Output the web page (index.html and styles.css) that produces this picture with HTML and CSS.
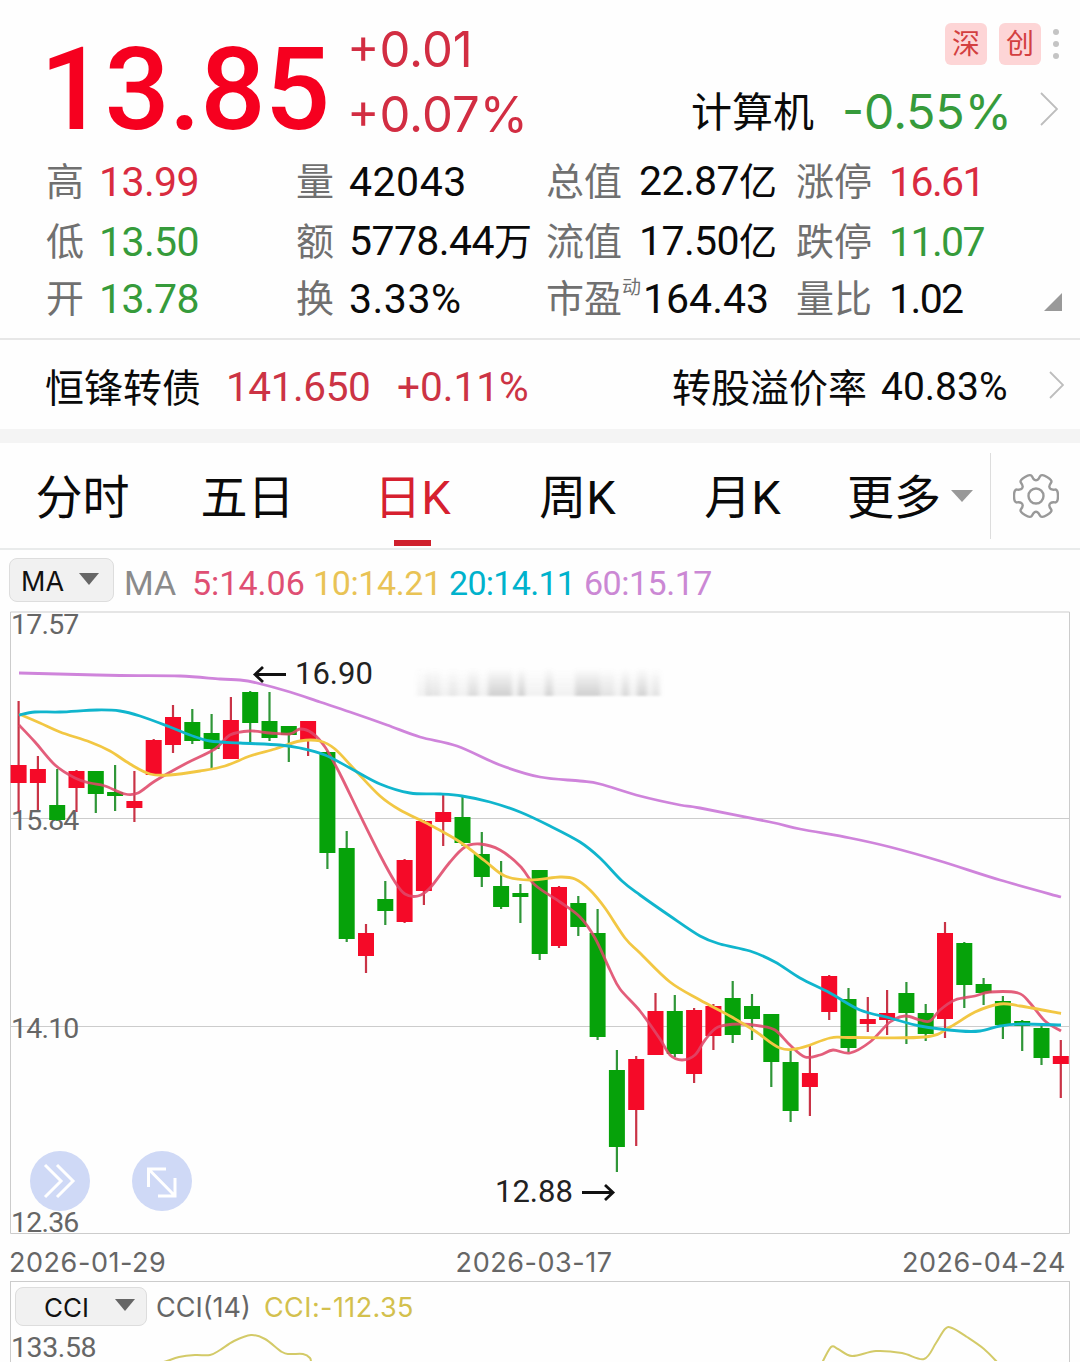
FILE: index.html
```html
<!DOCTYPE html>
<html lang="zh-CN">
<head>
  <meta charset="UTF-8">
  <meta name="viewport" content="width=device-width, initial-scale=1.0">
  <title>日K</title>
  <link rel="stylesheet" href="styles.css">
</head>
<body>
  <header class="quote">
    <div class="price">13.85</div>
    <div class="change">
      <div>+0.01</div>
      <div>+0.07%</div>
    </div>
    <div class="side">
      <div class="tags">
        <span class="tag">深</span>
        <span class="tag">创</span>
        <svg class="dots" width="8" height="32" viewBox="0 0 8 32"><circle cx="4" cy="4" r="3"/><circle cx="4" cy="16" r="3"/><circle cx="4" cy="28" r="3"/></svg>
      </div>
      <div class="sector">
        <span class="sector-name">计算机</span>
        <span class="sector-change green">-0.55%</span>
        <svg class="arrow" width="18" height="34" viewBox="0 0 18 34"><path d="M1 1l16 16L1 33"/></svg>
      </div>
    </div>
  </header>

  <section class="stats">
    <span class="label">高</span><span class="red">13.99</span>
    <span class="label">量</span><span class="wide-num">42043</span>
    <span class="label">总值</span><span>22.87<i>亿</i></span>
    <span class="label">涨停</span><span class="red tight">16.61</span>

    <span class="label">低</span><span class="green">13.50</span>
    <span class="label">额</span><span>5778.44<i>万</i></span>
    <span class="label">流值</span><span>17.50<i>亿</i></span>
    <span class="label">跌停</span><span class="green tight">11.07</span>

    <span class="label">开</span><span class="green">13.78</span>
    <span class="label">换</span><span class="wide-num">3.33%</span>
    <span class="label">市盈<sup>动</sup></span><span class="pe">164.43</span>
    <span class="label">量比</span><span class="tight">1.02</span>
    <svg class="corner" width="18" height="18" viewBox="0 0 18 18"><path d="M18 0v18H0z"/></svg>
  </section>

  <section class="bond">
    <span class="bond-name">恒锋转债</span>
    <span class="bond-price">141.650</span>
    <span class="bond-change">+0.11%</span>
    <span class="bond-label">转股溢价率</span>
    <span class="bond-rate">40.83%</span>
    <svg class="arrow" width="15" height="28" viewBox="0 0 15 28"><path d="M1 1l13 13L1 27"/></svg>
  </section>

  <nav class="tabs">
    <a class="tab">分时</a>
    <a class="tab">五日</a>
    <a class="tab active">日K</a>
    <a class="tab">周K</a>
    <a class="tab">月K</a>
    <a class="tab more">更多<svg width="22" height="12" viewBox="0 0 22 12"><path d="M0 0h22L11 12z"/></svg></a>
    <a class="settings">
      <svg width="46" height="48" viewBox="-23 -24 46 48"><path id="gear"/><circle r="7.5"/></svg>
    </a>
  </nav>

  <div class="indicator">
    <button class="select">MA<svg width="20" height="12" viewBox="0 0 20 12"><path d="M0 0h20L10 12z"/></svg></button>
    <span class="ma-name">MA</span>
    <span class="ma5">5:14.06</span>
    <span class="ma10">10:14.21</span>
    <span class="ma20">20:14.11</span>
    <span class="ma60">60:15.17</span>
  </div>

  <svg class="chart" width="1080" height="628" viewBox="0 608 1080 628">
    <defs>
      <filter id="soft" x="-10%" y="-30%" width="120%" height="160%"><feGaussianBlur stdDeviation="2 1"/></filter>
      <linearGradient id="fade" x1="0" y1="0" x2="0" y2="1">
        <stop offset="0" stop-color="#999" stop-opacity="0"/>
        <stop offset="1" stop-color="#999" stop-opacity=".42"/>
      </linearGradient>
    </defs>
    <path class="grid" d="M10.5 612H1069.500V1233.500H10.5zM10 818.500H1069M10 1026.500H1069"/>
    <g class="axis">
      <text x="11" y="634">17.57</text>
      <text x="11" y="830">15.84</text>
      <text x="11" y="1038">14.10</text>
      <text x="11" y="1232">12.36</text>
    </g>
    <g id="smudge" filter="url(#soft)"></g>
    <g id="candles"></g>
    <g id="lines"></g>
    <g class="mark">
      <path d="M286 674.500H255M263 667l-8 7.500 8 7.500"/>
      <text x="295" y="684">16.90</text>
      <path d="M582 1192.500H613M605 1185l8 7.500-8 7.500"/>
      <text x="495" y="1202">12.88</text>
    </g>
    <circle class="round" cx="60" cy="1181" r="30"/>
    <path class="round-icon" d="M45 1165l16 16-16 16M57 1165l16 16-16 16"/>
    <circle class="round" cx="162" cy="1181" r="30"/>
    <path class="round-icon" d="M166 1169H148.500V1187M148.500 1169L175 1196M158 1196H175V1178"/>
  </svg>

  <div class="dates">
    <span>2026-01-29</span>
    <span>2026-03-17</span>
    <span>2026-04-24</span>
  </div>

  <section class="cci">
    <div class="cci-head">
      <button class="select wide">CCI<svg width="20" height="12" viewBox="0 0 20 12"><path d="M0 0h20L10 12z"/></svg></button>
      <span class="cci-name">CCI(14)</span>
      <span class="cci-value">CCI:-112.35</span>
    </div>
    <div class="cci-body">
      <span class="cci-max">133.58</span>
      <svg class="cci-chart" width="900" height="36" viewBox="130 1326 900 36"><g id="cciLines"></g></svg>
    </div>
  </section>

<script>
  const NS = "http://www.w3.org/2000/svg";

  function add(parent, tag, attrs) {
    const el = document.createElementNS(NS, tag);
    for (const key in attrs) el.setAttribute(key, attrs[key]);
    document.getElementById(parent).appendChild(el);
  }

  // color, high, body top, body bottom, low
  const candles = [
    ["r",701,765,783,812],["r",756,769,783,810],["g",769,805,820,821],["r",770,771,788,812],
    ["g",771,771,794,813],["g",765,792,796,811],["r",771,801,808,822],["r",739,740,775,775],
    ["r",705,717,745,753],["g",709,722,741,744],["g",714,733,749,768],["r",697,720,759,759],
    ["g",691,692,723,744],["g",692,721,738,741],["g",726,726,735,762],["r",721,721,740,756],
    ["g",751,752,853,869],["g",831,848,939,942],["r",924,933,956,973],["g",881,899,911,925],
    ["r",859,860,922,923],["r",820,821,891,905],["r",795,812,822,846],["g",797,817,843,846],
    ["g",832,854,877,887],["g",861,886,907,909],["g",884,893,897,923],["g",870,870,954,960],
    ["r",886,887,946,948],["g",896,903,927,936],["g",909,933,1037,1040],["g",1050,1070,1147,1172],
    ["r",1056,1059,1110,1146],["r",993,1011,1055,1055],["g",995,1011,1054,1057],["r",1008,1010,1074,1083],
    ["r",1004,1006,1036,1050],["g",981,998,1035,1043],["g",994,1006,1019,1040],["g",1014,1014,1062,1087],
    ["g",1050,1062,1111,1122],["r",1046,1073,1087,1116],["r",975,976,1012,1020],["g",988,999,1048,1052],
    ["r",997,1019,1024,1032],["r",990,1013,1020,1035],["g",982,993,1013,1044],["g",1004,1013,1034,1041],
    ["r",922,933,1019,1038],["g",942,943,985,1008],["g",978,984,993,1005],["g",996,1001,1025,1039],
    ["g",1020,1021,1026,1051],["g",1025,1028,1058,1065],["r",1040,1056,1064,1098]
  ];
  candles.forEach(([c, high, top, bottom, low], i) => {
    const x = 18.6 + i * 19.3;
    add("candles", "rect", { class: "wick " + c, x: x - 1.1, y: high, width: 2.2, height: low - high });
    add("candles", "rect", { class: "body " + c, x: x - 8, y: top, width: 16, height: bottom - top });
  });

  // smooth curve through the points
  function curve(p) {
    let d = `M${p[0]} ${p[1]}`;
    for (let i = 0; i < p.length - 2; i += 2) {
      const a = i ? i - 2 : 0, e = Math.min(i + 4, p.length - 2);
      d += `C${p[i] + (p[i + 2] - p[a]) / 6} ${p[i + 1] + (p[i + 3] - p[a + 1]) / 6} `
         + `${p[i + 2] - (p[e] - p[i]) / 6} ${p[i + 3] - (p[e + 1] - p[i + 1]) / 6} ${p[i + 2]} ${p[i + 3]}`;
    }
    return d;
  }

  const lines = {
    l60: [19,673,58,674,120,675.5,180,676,220,679,240,680,257,683,290,692,320,702,350,712,387,725,420,737,457,746,500,765,540,777,580,781,600,784,640,796,680,805,700,808,770,822,800,829,850,838,890,847,940,861,1000,880,1061,897],
    l5: [19,725,35,742,55,765,75,778,90,783,105,786,125,794,138,793,155,781,185,764,215,749,230,735,250,731,270,733,290,734,300,729,312,733,325,747,340,774,360,815,380,855,395,882,405,894,418,896,430,888,450,862,465,847,480,844,500,850,520,866,535,885,560,902,580,917,595,938,610,970,620,989,640,1011,660,1039,670,1055,682,1060,695,1055,705,1040,718,1027,740,1024,760,1026,775,1030,790,1045,805,1057,820,1055,833,1050,850,1053,870,1042,890,1022,905,1016,920,1020,930,1021,940,1010,955,1000,975,996,990,992,1018,993,1030,1003,1045,1021,1061,1031],
    l10: [19,714,40,723,60,732,90,742,110,751,130,764,150,774,170,775,200,771,225,766,250,756,275,749,300,741,320,741,335,749,355,770,380,796,400,810,430,825,460,842,485,861,505,876,530,880,560,877,575,879,590,890,605,908,625,938,640,953,670,982,700,1000,730,1016,755,1031,780,1048,800,1048,830,1038,850,1037.5,925,1037,950,1027,975,1012,1000,1004,1020,1006,1061,1013.5],
    l20: [19,715,35,712,60,712,97,710,120,711,140,716,170,727,190,735,210,741,240,743,280,745,300,748,325,755,350,768,380,784,410,793,440,794,462,796,490,802,520,812,550,826,580,842,600,858,622,881,640,895,670,916,700,936,720,944,750,951,775,962,800,978,830,993,860,1010,890,1018,920,1026,960,1031,980,1031,1000,1026,1020,1024,1061,1025]
  };
  for (const name in lines) add("lines", "path", { class: "line " + name, d: curve(lines[name]) });

  const cci = [
    [160,1364,167,1362,179,1358,195,1356,210,1356,220,1351,234,1342,251,1336,265,1340,282,1353,290,1355,303,1355,310,1359,311,1364],
    [821,1366,831,1348,838,1350,852,1357,876,1352,902,1354,924,1360,936,1344,945,1330,952,1329,967,1338,984,1350,998,1364]
  ];
  cci.forEach(p => add("cciLines", "path", { class: "line cci-line", d: curve(p) }));

  // x, width, opacity
  [[417,12,.3],[426,14,.6],[449,8,.3],[468,10,.6],[488,24,.9],[518,7,.9],[545,8,.8],[575,25,.9],[600,14,.4],[622,7,.7],[637,10,.8],[652,8,.4]]
    .forEach(([x, w, o]) => add("smudge", "rect", { x, y: 668, width: w, height: 28, fill: "url(#fade)", opacity: o }));
  add("smudge", "rect", { x: 440, y: 670, width: 220, height: 26, fill: "url(#fade)", opacity: .3 });

  // six-tooth gear outline, rounded through the midpoints
  const pts = [];
  for (let i = 0; i < 6; i++) {
    [[-30, 15.5], [-21, 17], [-17, 23], [17, 23], [21, 17]].forEach(([a, r]) => {
      const t = (i * 60 + a) * Math.PI / 180;
      pts.push([r * Math.cos(t), r * Math.sin(t)]);
    });
  }
  const mid = (a, b) => (a[0] + b[0]) / 2 + " " + (a[1] + b[1]) / 2;
  let gear = "M" + mid(pts[pts.length - 1], pts[0]);
  pts.forEach((p, i) => gear += `Q${p[0]} ${p[1]} ${mid(p, pts[(i + 1) % pts.length])}`);
  document.getElementById("gear").setAttribute("d", gear + "Z");
</script>
</body>
</html>
```
FILE: styles.css
```css
body {
  margin: 0;
  width: 1080px;
  height: 1362px;
  overflow: hidden;
  background: #fefefe;
  color: #0a0a0a;
  font-family: Roboto, "Noto Sans CJK SC", sans-serif;
  white-space: nowrap;
}

.red {
  color: #d92b3f;
}

.green {
  color: #369b3b;
}

.quote {
  display: flex;
  height: 152px;
}

.price {
  box-sizing: border-box;
  width: 347px;
  padding: 23px 0 0 40px;
  font-size: 115px;
  line-height: 134px;
  font-weight: 500;
  letter-spacing: -0.8px;
  color: #f6001f;
}

.change {
  padding-top: 17px;
  font-family: Inter, sans-serif;
  font-size: 49px;
  line-height: 65px;
  color: #d22d42;
}

.side {
  margin-left: auto;
}

.tags {
  display: flex;
  justify-content: flex-end;
  align-items: center;
  gap: 12px;
  padding: 22px 20px 0 0;
  height: 43px;
}

.tag {
  box-sizing: border-box;
  width: 42px;
  height: 42px;
  padding-top: 2px;
  border-radius: 6px;
  background: #fdd5d6;
  color: #d33f40;
  font-size: 28px;
  line-height: 40px;
  text-align: center;
}

.dots {
  fill: #c4c4c4;
  margin-left: -1px;
}

.sector {
  display: flex;
  align-items: center;
  height: 88px;
  padding-right: 22px;
}

.sector-name {
  font-size: 41px;
  margin-right: 28px;
}

.sector-change {
  padding-top: 4px;
  font-family: Inter, sans-serif;
  font-size: 48px;
  width: 198px;
}

.arrow {
  fill: none;
  stroke: #bdbdbd;
  stroke-width: 1.8;
}

.stats {
  position: relative;
  box-sizing: border-box;
  height: 188px;
  padding: 0 0 0 46px;
  border-bottom: 2px solid #e7e7e7;
  display: grid;
  grid-template-columns: 53px 197px 53px 197px 93px 157px 93px 138px;
  grid-template-rows: 60px 60px 55px;
  align-items: center;
  font-size: 41px;
  line-height: 55px;
  letter-spacing: -0.6px;
}

.stats .wide-num {
  letter-spacing: 0.5px;
}

.stats .tight {
  letter-spacing: -1.6px;
}

.stats i {
  font-style: normal;
  font-size: 38px;
}

.stats .label {
  color: #707070;
  font-size: 38px;
  letter-spacing: 0;
}

.label sup {
  position: absolute;
  font-size: 19px;
  line-height: 20px;
  margin-top: 6px;
}

.stats .pe {
  padding-left: 4px;
  letter-spacing: 0;
}

.corner {
  position: absolute;
  right: 18px;
  bottom: 27px;
  fill: #999;
}

.bond {
  display: flex;
  align-items: center;
  height: 89px;
  padding: 0 16px 0 45px;
  border-bottom: 14px solid #f4f4f4;
  font-size: 39px;
}

.bond-name {
  width: 181px;
}

.bond-price,
.bond-change {
  padding-top: 4px;
  font-size: 40.5px;
  color: #cc3344;
}

.bond-price {
  width: 171px;
  letter-spacing: -0.4px;
}

.bond-label {
  margin-left: auto;
  margin-right: 14px;
}

.bond-rate {
  padding-top: 4px;
  width: 168px;
  font-size: 39px;
}

.tabs {
  display: flex;
  align-items: center;
  box-sizing: border-box;
  height: 107px;
  border-bottom: 2px solid #e9ebeb;
  font-size: 47px;
}

.tab {
  position: relative;
  box-sizing: border-box;
  width: 165px;
  height: 105px;
  padding-top: 2px;
  line-height: 105px;
  text-align: center;
}

.tab.active {
  color: #d6202f;
}

.tab.active::after {
  content: "";
  position: absolute;
  left: 64px;
  bottom: 2px;
  width: 37px;
  height: 6px;
  background: #cf202d;
}

.tab.more {
  padding-left: 5px;
}

.more svg {
  margin-left: 10px;
  margin-bottom: 12px;
  fill: #999;
}

.settings {
  display: flex;
  align-items: center;
  justify-content: center;
  width: 89px;
  height: 86px;
  border-left: 1px solid #ddd;
}

.settings svg {
  fill: none;
  stroke: #999;
  stroke-width: 2.4;
  stroke-linejoin: round;
}

.indicator {
  display: flex;
  align-items: center;
  height: 58px;
  padding: 7px 0 0 9px;
  box-sizing: border-box;
  font-size: 34px;
}

.select {
  display: flex;
  align-items: center;
  justify-content: space-between;
  box-sizing: border-box;
  width: 105px;
  height: 44px;
  margin-top: -5px;
  padding: 2px 14px 0 11px;
  border: 1px solid #ddd;
  border-radius: 8px;
  background: #f1f1f1;
  font-family: Inter, sans-serif;
  font-size: 27px;
  color: #111;
}

.select svg {
  fill: #666;
  margin-bottom: 4px;
}

.select.wide {
  width: 132px;
  height: 39px;
  margin-top: 0;
  padding: 2px 11px 0 28px;
  font-size: 26px;
}

.ma-name {
  width: 68px;
  margin-left: 10px;
  color: #8b8b8b;
}

.ma5 {
  width: 121px;
  color: #df4f73;
}

.ma10 {
  width: 136px;
  letter-spacing: -0.4px;
  color: #e9c355;
}

.ma20 {
  width: 135px;
  letter-spacing: -0.7px;
  color: #00b2cc;
}

.ma60 {
  letter-spacing: -0.5px;
  color: #cb88d4;
}

.chart {
  display: block;
  overflow: visible;
  font-size: 28.5px;
}

.grid {
  fill: none;
  stroke: #ccc;
}

.axis {
  fill: #666;
  letter-spacing: -0.8px;
}

.r {
  fill: #f50a28;
}

.g {
  fill: #06a20a;
}

.wick.r {
  fill: #c93346;
}

.wick.g {
  fill: #2f9638;
}

.line {
  fill: none;
  stroke-width: 2.8;
}

.l5 {
  stroke: #df4869;
  opacity: .88;
}

.l10 {
  stroke: #f2c743;
}

.l20 {
  stroke: #10b5cd;
}

.l60 {
  stroke: #cf84db;
}

.mark text {
  fill: #222;
  font-size: 31px;
}

.mark path {
  fill: none;
  stroke: #111;
  stroke-width: 2.8;
}

.round {
  fill: #cfd9f6;
}

.round-icon {
  fill: none;
  stroke: #fff;
  stroke-width: 3;
}

.dates {
  display: flex;
  justify-content: space-between;
  height: 45px;
  padding: 0 14px 0 9px;
  line-height: 53px;
  font-family: Inter, sans-serif;
  font-size: 27px;
  letter-spacing: 0.55px;
  color: #666;
}

.cci {
  margin: 0 10px;
  height: 90px;
  border: 1px solid #ccc;
}

.cci-head {
  display: flex;
  align-items: center;
  height: 48px;
  padding-left: 4px;
  font-family: Inter, sans-serif;
  font-size: 27px;
}

.cci-name {
  width: 108px;
  margin: 3px 0 0 9px;
  color: #666;
}

.cci-value {
  margin-top: 3px;
  letter-spacing: 0.4px;
  color: #d3c04d;
}

.cci-body {
  display: flex;
  height: 36px;
  margin-top: -5px;
}

.cci-max {
  width: 119px;
  padding-top: 10px;
  font-size: 28.5px;
  line-height: 26px;
  letter-spacing: -0.4px;
  color: #666;
}

.cci-line {
  stroke: #d3ca68;
  stroke-width: 2;
}
```
